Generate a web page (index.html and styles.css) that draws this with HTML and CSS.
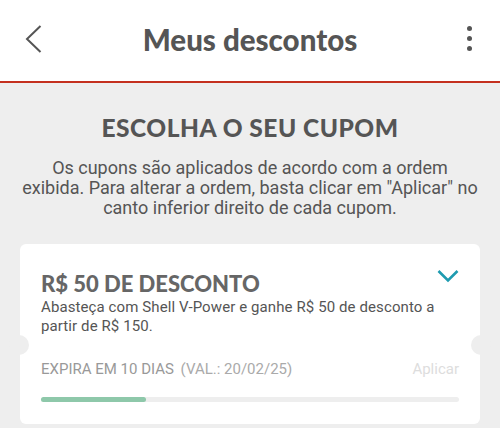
FILE: index.html
```html
<!DOCTYPE html>
<html lang="pt-BR">
<head>
    <meta charset="UTF-8">
    <meta name="viewport" content="width=device-width, initial-scale=1.0">
    <title>Meus descontos</title>
    <link rel="stylesheet" href="styles.css">
</head>
<body>
    <header class="topbar">
        <a class="back" href="#">
            <svg width="17" height="28" viewBox="0 0 17 28"><path d="M15.5 1 L2 14 L15.5 27" fill="none" stroke="#555" stroke-width="2"/></svg>
        </a>
        <h1>Meus descontos</h1>
        <span class="more">
            <i></i><i></i><i></i>
        </span>
    </header>

    <main class="content">
        <h2>ESCOLHA O SEU CUPOM</h2>
        <p class="intro">Os cupons são aplicados de acordo com a ordem exibida. Para alterar a ordem, basta clicar em "Aplicar" no canto inferior direito de cada cupom.</p>

        <div class="coupon">
            <div class="coupon-head">
                <h3>R$ 50 DE DESCONTO</h3>
                <svg class="toggle" width="22" height="14" viewBox="0 0 22 14"><path d="M1.5 2 L11 11.5 L20.5 2" fill="none" stroke="#1e9bb0" stroke-width="2.6"/></svg>
            </div>
            <p class="desc">Abasteça com Shell V-Power e ganhe R$ 50 de desconto a partir de R$ 150.</p>
            <div class="coupon-foot">
                <span class="expire"><b>EXPIRA EM 10 DIAS</b> (VAL.: 20/02/25)</span>
                <span class="apply">Aplicar</span>
            </div>
            <div class="progress"><div class="progress-fill" style="width: 25%"></div></div>
        </div>
    </main>
</body>
</html>
```

FILE: styles.css
```css
body {
    margin: 0;
    padding: 0;
    font-family: Roboto, Arial, sans-serif;
    background-color: #eeeeee;
    color: #555;
}

.topbar {
    height: 81px;
    background-color: #fff;
    border-bottom: 2px solid #c4301f;
    display: flex;
    align-items: center;
}

.topbar .back,
.topbar .more {
    width: 60px;
    display: flex;
    margin-top: -4px;
}

.topbar .back {
    padding-left: 25px;
    box-sizing: border-box;
}

.topbar h1 {
    flex: 1;
    margin: -3px 0 0;
    text-align: center;
    font-family: Lato, sans-serif;
    font-weight: 900;
    font-size: 29.5px;
    color: #555;
}

.topbar .more {
    flex-direction: column;
    align-items: flex-end;
    gap: 5px;
    padding-right: 28px;
    box-sizing: border-box;
}

.topbar .more i {
    width: 5px;
    height: 5px;
    border-radius: 50%;
    background-color: #555;
}

.content {
    padding: 30px 20px 20px;
}

.content h2 {
    margin: 0;
    text-align: center;
    font-family: Lato, sans-serif;
    font-weight: 900;
    font-size: 24.5px;
    letter-spacing: 0.5px;
    color: #555;
}

.intro {
    margin: 16px 0 0;
    text-align: center;
    font-size: 18px;
    line-height: 20px;
    color: #555;
}

.coupon {
    position: relative;
    margin-top: 26px;
    background-color: #fff;
    border-radius: 6px;
    padding: 26px 21px 22px;
}

.coupon::before,
.coupon::after {
    content: "";
    position: absolute;
    top: 91px;
    width: 20px;
    height: 20px;
    border-radius: 50%;
    background-color: #eeeeee;
}

.coupon::before {
    left: -11px;
}

.coupon::after {
    right: -11px;
}

.coupon-head {
    display: flex;
    justify-content: space-between;
    align-items: flex-start;
}

.coupon-head h3 {
    margin: 0;
    font-family: Lato, sans-serif;
    font-weight: 900;
    font-size: 22px;
    color: #666;
}

.toggle {
    margin-top: -1px;
}

.desc {
    margin: 1px 0 0;
    font-size: 15px;
    line-height: 19px;
    letter-spacing: 0.1px;
    color: #555;
}

.coupon-foot {
    display: flex;
    justify-content: space-between;
    margin-top: 24px;
    font-size: 15px;
}

.expire {
    color: #aaa;
}

.expire b {
    font-weight: 400;
    color: #999;
    margin-right: 3px;
}

.apply {
    color: #ddd;
}

.progress {
    margin-top: 19px;
    height: 5px;
    border-radius: 3px;
    background-color: #eee;
}

.progress-fill {
    height: 100%;
    border-radius: 3px;
    background-color: #8ec8aa;
}
```
